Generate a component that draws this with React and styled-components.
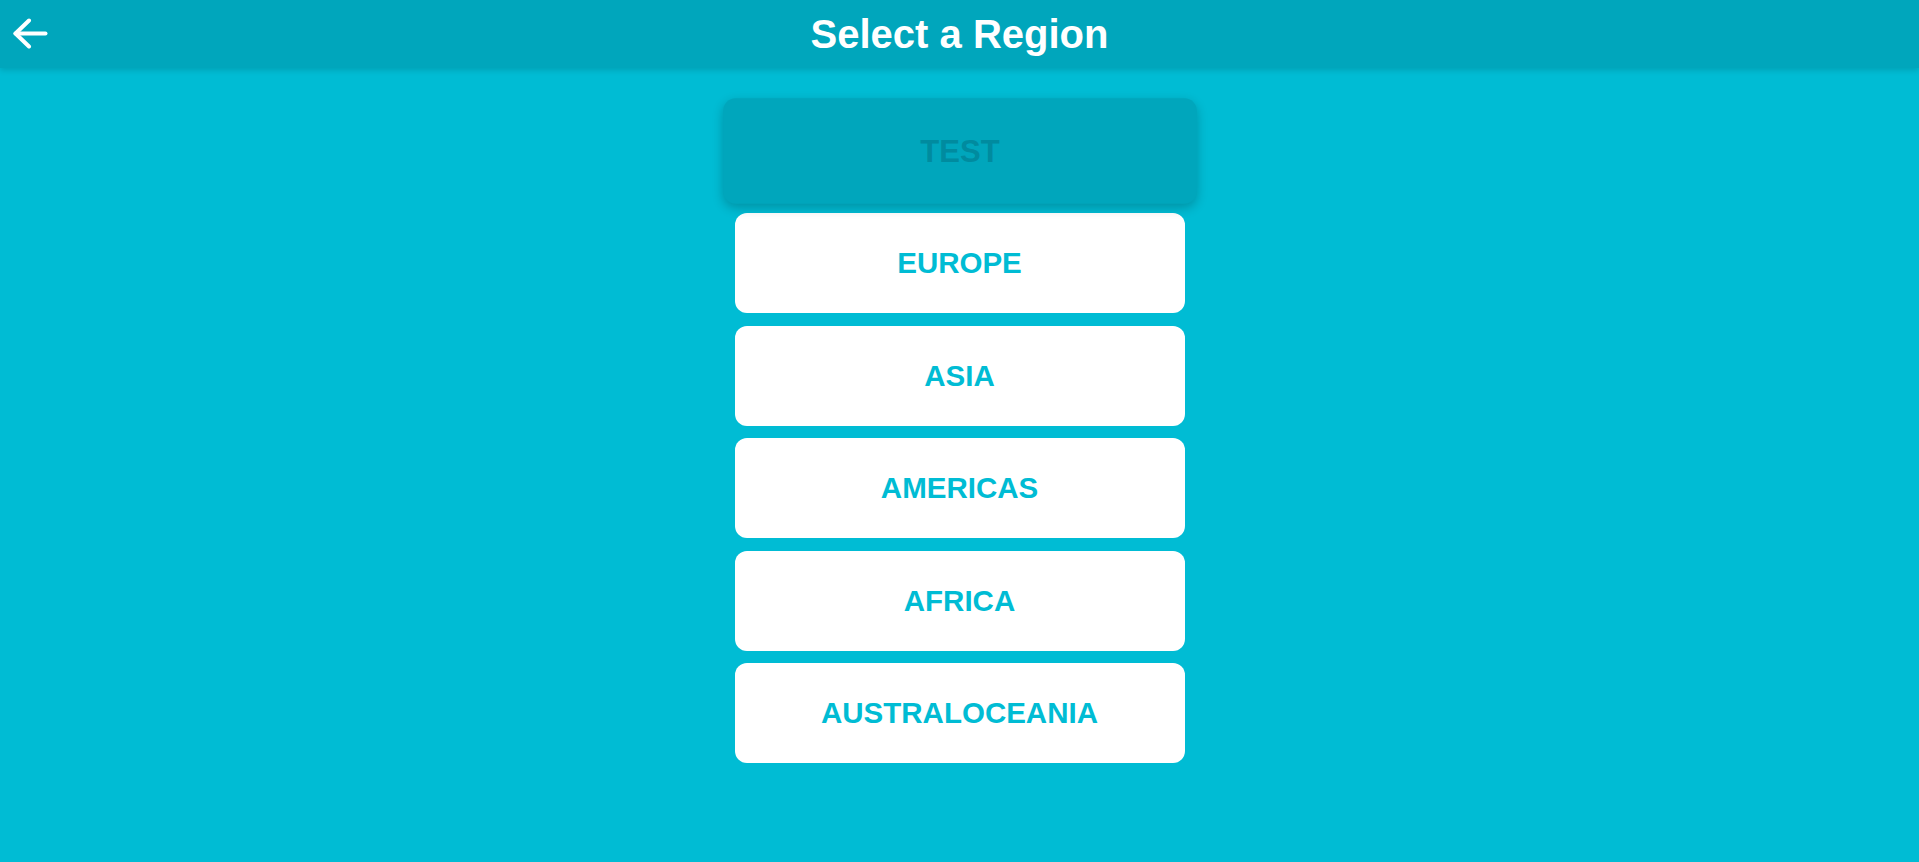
import React, { useState } from 'react';
import styled, { createGlobalStyle } from 'styled-components';

const GlobalStyle = createGlobalStyle`
    html, body {
        margin: 0;
        padding: 0;
        background: #00bcd4;
        font-family: "Liberation Sans", Arial, sans-serif;
    }
`

const Page = styled.div`
    min-height: 100vh;
    background: #00bcd4;
`

const Header = styled.header`
    display: grid;
    grid-template-columns: 1fr auto 1fr;
    align-items: center;
    height: 68px;
    background: #00a6bc;
    box-shadow: 0 2px 6px rgba(0, 0, 0, 0.15);
    position: relative;
    z-index: 2;
`

const BackButton = styled.button`
    justify-self: start;
    display: flex;
    align-items: center;
    margin-left: 12px;
    margin-top: -2px;
    padding: 0;
    border: none;
    background: none;
    cursor: pointer;
`

const Title = styled.h1`
    margin: 0;
    color: #fff;
    font-size: 40px;
    font-weight: bold;
    line-height: 1;
`

const RegionList = styled.div`
    display: flex;
    flex-direction: column;
    align-items: center;
    gap: 12.5px;
    padding-top: 32.5px;
`

const RegionCard = styled.div`
    display: flex;
    align-items: center;
    justify-content: center;
    width: 450px;
    height: 100px;
    border-radius: 12px;
    font-size: 29.5px;
    font-weight: bold;
    cursor: pointer;
    background: ${p => p.active ? '#00a6bc' : '#fff'};
    color: ${p => p.active ? '#008b9f' : '#00bcd4'};
    transform: ${p => p.active ? 'scale(1.053)' : 'none'};
    box-shadow: ${p => p.active ? '0 4px 10px rgba(0, 0, 0, 0.22)' : 'none'};
`

const regions = ['TEST', 'EUROPE', 'ASIA', 'AMERICAS', 'AFRICA', 'AUSTRALOCEANIA']

const App = () => {
    const [selected, setSelected] = useState('TEST')

    return (
        <Page>
            <GlobalStyle />
            <Header>
                <BackButton aria-label="Back">
                    <svg width="36" height="32" viewBox="0 0 36 32" fill="none" stroke="#fff" strokeWidth="4" strokeLinecap="round" strokeLinejoin="round">
                        <path d="M3.5 16.5H33.5" />
                        <path d="M17 3.5L3.5 16.5L17 29.5" />
                    </svg>
                </BackButton>
                <Title>Select a Region</Title>
                <div />
            </Header>
            <RegionList>
                {regions.map(r => (
                    <RegionCard key={r} active={selected === r} onClick={() => setSelected(r)}>
                        {r}
                    </RegionCard>
                ))}
            </RegionList>
        </Page>
    )
}

export default App;
